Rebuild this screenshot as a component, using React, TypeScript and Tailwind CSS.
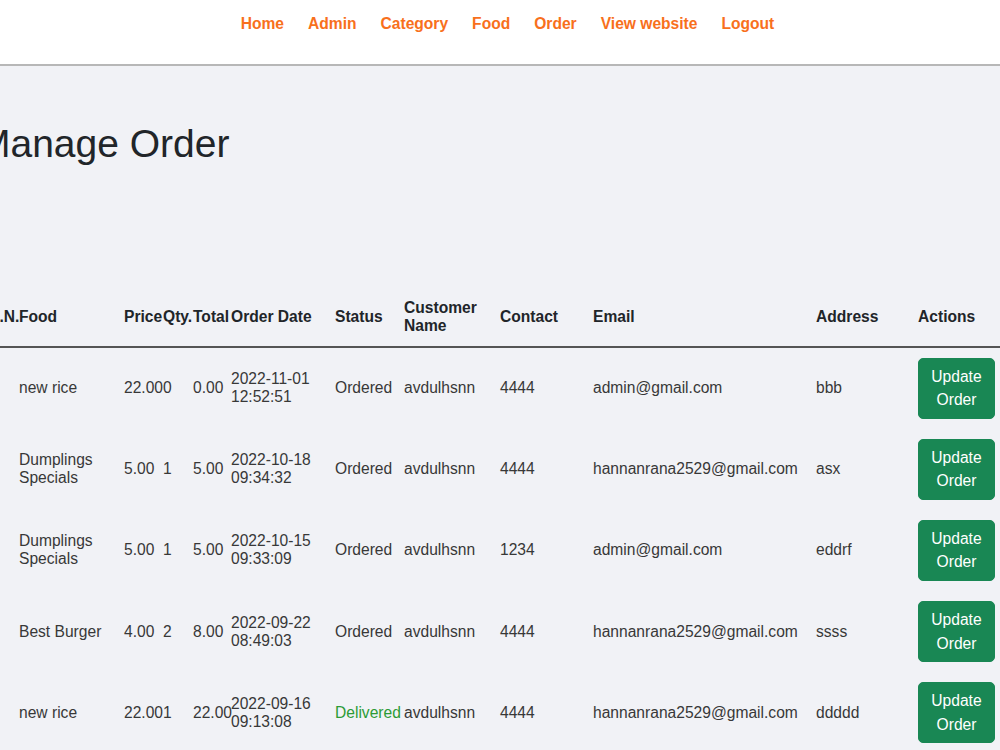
const navLinks = ['Home', 'Admin', 'Category', 'Food', 'Order', 'View website', 'Logout'];

interface OrderRow {
  sn: number;
  food: string;
  price: string;
  qty: string;
  total: string;
  date: string;
  status: 'Ordered' | 'Delivered';
  customer: string;
  contact: string;
  email: string;
  address: string;
}

const orders: OrderRow[] = [
  { sn: 1, food: 'new rice', price: '22.00', qty: '0', total: '0.00', date: '2022-11-01 12:52:51', status: 'Ordered', customer: 'avdulhsnn', contact: '4444', email: 'admin@gmail.com', address: 'bbb' },
  { sn: 2, food: 'Dumplings Specials', price: '5.00', qty: '1', total: '5.00', date: '2022-10-18 09:34:32', status: 'Ordered', customer: 'avdulhsnn', contact: '4444', email: 'hannanrana2529@gmail.com', address: 'asx' },
  { sn: 3, food: 'Dumplings Specials', price: '5.00', qty: '1', total: '5.00', date: '2022-10-15 09:33:09', status: 'Ordered', customer: 'avdulhsnn', contact: '1234', email: 'admin@gmail.com', address: 'eddrf' },
  { sn: 4, food: 'Best Burger', price: '4.00', qty: '2', total: '8.00', date: '2022-09-22 08:49:03', status: 'Ordered', customer: 'avdulhsnn', contact: '4444', email: 'hannanrana2529@gmail.com', address: 'ssss' },
  { sn: 5, food: 'new rice', price: '22.00', qty: '1', total: '22.00', date: '2022-09-16 09:13:08', status: 'Delivered', customer: 'avdulhsnn', contact: '4444', email: 'hannanrana2529@gmail.com', address: 'ddddd' },
];

const columns = [
  { label: 'S.N.', w: 'w-[30px]' },
  { label: 'Food', w: 'w-[105px]' },
  { label: 'Price', w: 'w-[39px]' },
  { label: 'Qty.', w: 'w-[30px]' },
  { label: 'Total', w: 'w-[38px]' },
  { label: 'Order Date', w: 'w-[104px]' },
  { label: 'Status', w: 'w-[69px]' },
  { label: 'Customer Name', w: 'w-[96px]' },
  { label: 'Contact', w: 'w-[93px]' },
  { label: 'Email', w: 'w-[223px]' },
  { label: 'Address', w: 'w-[102px]' },
  { label: 'Actions', w: 'w-[90px]' },
];

export default function App() {
  return (
    <div className="h-screen w-full overflow-hidden bg-[#f1f2f6] font-['Liberation_Sans',Arial,sans-serif] text-[#383838]">
      <header className="h-[66px] bg-white border-b-2 border-[#b7b7b7]">
        <nav className="flex justify-center gap-[24px] pt-[15px] pl-[15px]">
          {navLinks.map((link) => (
            <a key={link} href="#" className="text-[15.6px] leading-[normal] font-bold text-[#f8701c]">
              {link}
            </a>
          ))}
        </nav>
      </header>

      <main className="-ml-[22px]">
        <h1 className="pt-[55px] text-[39px] leading-[1.2] text-[#212529]">Manage Order</h1>

        {/* page is scrolled sideways in the shot, so the S.N. column sits mostly off-screen */}
        <table className="mt-[121px] ml-[11px] w-[1019px] table-fixed border-collapse text-left text-[15.6px] leading-[normal]">
          <thead>
            <tr className="border-b-2 border-[#555]">
              {columns.map((c) => (
                <th key={c.label} className={`${c.w} py-[10.5px] align-middle font-bold text-[#212529]`}>
                  {c.label}
                </th>
              ))}
            </tr>
          </thead>
          <tbody>
            {orders.map((o) => (
              <tr key={o.sn}>
                <td className="py-[10.25px] align-middle text-transparent">{o.sn}</td>
                <td className="py-[10.25px] align-middle">{o.food}</td>
                <td className="py-[10.25px] align-middle whitespace-nowrap">{o.price}</td>
                <td className="py-[10.25px] align-middle">{o.qty}</td>
                <td className="py-[10.25px] align-middle whitespace-nowrap">{o.total}</td>
                <td className="py-[10.25px] align-middle">{o.date}</td>
                <td className="py-[10.25px] align-middle">
                  {o.status === 'Delivered' ? <span className="text-[#2c9b35]">Delivered</span> : o.status}
                </td>
                <td className="py-[10.25px] align-middle">{o.customer}</td>
                <td className="py-[10.25px] align-middle">{o.contact}</td>
                <td className="py-[10.25px] align-middle">{o.email}</td>
                <td className="py-[10.25px] align-middle">{o.address}</td>
                <td className="py-[10.25px] align-middle">
                  <button className="w-[77px] rounded-[5px] border border-[#198754] bg-[#198754] px-[11px] py-[5.9px] text-[15.6px] leading-[1.5] text-white">
                    Update Order
                  </button>
                </td>
              </tr>
            ))}
          </tbody>
        </table>
      </main>
    </div>
  );
}
